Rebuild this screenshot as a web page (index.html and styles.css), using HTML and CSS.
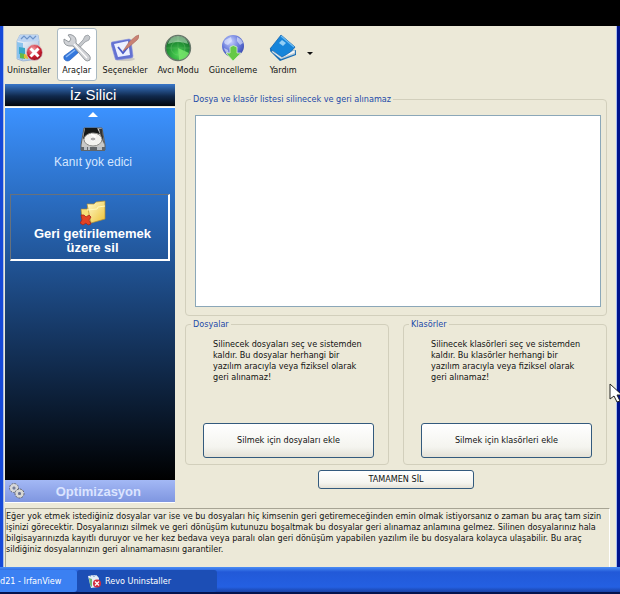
FILE: index.html
```html
<!DOCTYPE html>
<html lang="tr">
<head>
<meta charset="utf-8">
<title>Revo Uninstaller</title>
<link rel="stylesheet" href="styles.css">
</head>
<body>
<div class="window">
  <nav class="toolbar" aria-label="Araç çubuğu">
    <button class="tool" type="button">
      <svg class="tool-icon" viewBox="0 0 28 28" aria-hidden="true">
        <defs>
          <linearGradient id="box" x1="0" y1="0" x2="1" y2="1"><stop offset="0" stop-color="#fff"/><stop offset="1" stop-color="#9fb9dc"/></linearGradient>
          <radialGradient id="red" cx=".4" cy=".3" r=".8"><stop offset="0" stop-color="#f4a0a8"/><stop offset=".6" stop-color="#c81c2c"/><stop offset="1" stop-color="#860f20"/></radialGradient>
        </defs>
        <path d="M2 7 5 1h18l1 6v18l-16 2-6-2z" fill="url(#box)" stroke="#86a9d4" stroke-width=".7"/>
        <path d="M2 7 5 1h18l1 6-15 1z" fill="#bcd4f2"/>
        <path d="m6 5 3-3 3 3 3-3 3 3 3-3" fill="none" stroke="#6d94c9" stroke-width="1.2"/>
        <path d="M2 8l6 1v17l-6-2z" fill="#8bc3ee"/>
        <path d="M4 13l6 1v7l-6-1z" fill="#3aa7c9"/><path d="M5 19l5 1v5l-5-1z" fill="#63b94a"/><path d="M9 20l4 1v4l-4-1z" fill="#e2bd38"/>
        <circle cx="19.500" cy="18.500" r="8" fill="url(#red)" stroke="#d9c5cc" stroke-width=".8"/>
        <path d="m15.500 14.500 8 8m0-8-8 8" stroke="#fff" stroke-width="3"/>
      </svg>
      <span>Uninstaller</span>
    </button>
    <button class="tool tool-active" type="button" aria-pressed="true">
      <svg class="tool-icon" viewBox="0 0 28 28" aria-hidden="true">
        <path d="M25 1 22 2l-2 4L4 23l2 2L22 8l4-2 1-3z" fill="#c6c9cd" stroke="#8b9096" stroke-width=".7"/>
        <path d="M12 14 1 22q-1 4 3 5 2 0 3-1l9-8z" fill="#3478dd" stroke="#1c55b4" stroke-width=".6"/>
        <path d="m3 23 9-7" stroke="#8dbaf6" stroke-width="1.500"/>
        <path d="M1 5q-1 6 5 7 2 0 4 0l12 14q2 2 5 0 1-3-1-5L13 9q1-6-4-8-2-1-4 0l3 4-2 3z" fill="#d0d2d6" stroke="#80868c" stroke-width=".8"/>
        <path d="m11 10 13 14" stroke="#fff" stroke-width="1.200"/>
      </svg>
      <span>Araçlar</span>
    </button>
    <button class="tool" type="button">
      <svg class="tool-icon" viewBox="0 0 28 28" aria-hidden="true">
        <ellipse cx="14" cy="25" rx="10" ry="2" fill="#b9b5b4" opacity=".6"/>
        <path d="m1 8 17-3q2 0 2 2l2 15q0 2-2 2L6 26q-2 0-2-2L0 10q0-2 1-2z" fill="#6472d2" stroke="#8992dd" stroke-width=".6"/>
        <path d="m3 10 14-3 2 14-12 2z" fill="#edf0ff"/>
        <path d="m7 13 5 6 5-6" fill="none" stroke="#4b5bc7" stroke-width="1.800"/>
        <path d="m12 17 6-9 7-6 3-1q0 4-3 6l-7 6z" fill="#c98273" stroke="#a46056" stroke-width=".5"/>
      </svg>
      <span>Seçenekler</span>
    </button>
    <button class="tool" type="button">
      <svg class="tool-icon" viewBox="0 0 28 28" aria-hidden="true">
        <defs><radialGradient id="radar" cx=".5" cy=".75" r=".75"><stop offset="0" stop-color="#4cd552"/><stop offset=".55" stop-color="#259637"/><stop offset="1" stop-color="#145f28"/></radialGradient></defs>
        <circle cx="14" cy="14" r="12.500" fill="url(#radar)" stroke="#68776b" stroke-width="1.400"/>
        <path d="M14 14 25 19A12 12 0 0 1 15 26z" fill="#80ed70" opacity=".75"/>
        <circle cx="14" cy="14" r="7" fill="none" stroke="#75ca75" stroke-width=".4"/>
        <path d="M14 2v24M2 14h24" stroke="#76bf77" stroke-width=".3"/>
        <path d="M4 10q2-8 10-8t10 8q-10-4-20 0z" fill="#dcf3dd" opacity=".5"/>
      </svg>
      <span>Avcı Modu</span>
    </button>
    <button class="tool" type="button">
      <svg class="tool-icon" viewBox="0 0 28 28" aria-hidden="true">
        <defs><radialGradient id="globe" cx=".4" cy=".3" r=".7"><stop offset="0" stop-color="#c8d2ff"/><stop offset=".6" stop-color="#6679da"/><stop offset="1" stop-color="#3e4fb4"/></radialGradient></defs>
        <circle cx="14" cy="12" r="11" fill="url(#globe)"/>
        <path d="m6 6 6-3 1 4-4 4-3-1-1-2zm12-3q5 2 6 6l-3 2-3-4zM5 14l4 2 1 4q-4-1-5-6z" fill="#e8efff" opacity=".6"/>
        <path d="M11 13q3-3 7 0v6h4l-8 8-7-8h4z" fill="#65c947" stroke="#d7f0cd" stroke-width=".8"/>
      </svg>
      <span>Güncelleme</span>
    </button>
    <button class="tool" type="button">
      <svg class="tool-icon" viewBox="0 0 28 28" aria-hidden="true">
        <path d="m1 17 10 10 16-6v-5l-15 5L2 13z" fill="#116ab5"/>
        <path d="m3 18 9 7 14-5v-4l-14 5-9-7z" fill="#f2f5f7" stroke="#7fa6c3" stroke-width=".5"/>
        <path d="m1 15 11-14 14 12q-3 5-13 10z" fill="#1685da" stroke="#0c5ba7" stroke-width=".7"/>
        <path d="m12 2 13 11" stroke="#6dbcf3" stroke-width="1.200"/>
        <path d="m10 9 3-3 4 3-3 3z" fill="#91cef6"/>
        <path d="m4 17 9 7 13-5" fill="none" stroke="#9baebc" stroke-width=".6"/>
      </svg>
      <span>Yardım</span>
    </button>
    <button class="more" type="button" aria-label="Yardım seçenekleri"></button>
  </nav>

  <div class="body">
    <aside class="sidebar">
      <h1 class="side-title">İz Silici</h1>
      <div class="side-list">
        <span class="scroll-up"></span>
        <button class="side-item" type="button">
          <svg class="side-icon" viewBox="0 0 26 26" aria-hidden="true">
            <path d="M4 2h18l3 17v5H1v-5z" fill="#c8c9c8" stroke="#605f5c"/>
            <path d="M5 2h12l3 6-7-1-10 6z" fill="#151818"/>
            <path d="M19 3h3l2 15-3-7z" fill="#343434"/>
            <ellipse cx="13" cy="13.500" rx="9" ry="6.500" fill="#f2f2ef" stroke="#8b8b88"/>
            <ellipse cx="13" cy="13" rx="3" ry="2" fill="#aaa" stroke="#fff"/>
            <path d="m11 8 5 3" stroke="#fff" stroke-width="1.500"/>
            <path d="M1 21h24v4H1z" fill="#606569"/><path d="M4 21h3v3H4m4-3h2v3H8m9-3h5v3h-5" fill="#b9bec3"/>
          </svg>
          <span>Kanıt yok edici</span>
        </button>
        <button class="side-item side-selected" type="button">
          <svg class="side-icon" viewBox="0 0 26 26" aria-hidden="true">
            <defs><linearGradient id="folder" x1="0" y1="0" x2="1" y2="1"><stop offset="0" stop-color="#fffbd0"/><stop offset="1" stop-color="#edc236"/></linearGradient></defs>
            <path d="M1 9h6l1-2h8v12l-9 4-5-4z" fill="#f7df79" stroke="#a9812b" stroke-width=".6"/>
            <path d="M7 4h7l2-2 9-1v18l-14 4z" fill="url(#folder)" stroke="#b7902f" stroke-width=".7"/>
            <path d="m7 10 10-1 1-2 7-1" fill="none" stroke="#fff9bb"/>
            <path d="m1 15 3 0 2 2 3-2 2 2-2 3 2 4-3 1-2-2-3 2-3-2 2-3z" fill="#e34325" stroke="#a92717" stroke-width=".8"/>
          </svg>
          <span>Geri getirilememek<br>üzere sil</span>
        </button>
      </div>
      <button class="side-section" type="button">
        <svg class="gears" viewBox="0 0 16 16" aria-hidden="true">
          <circle cx="5" cy="5" r="3" fill="none" stroke="#d8d8d8" stroke-width="3"/>
          <circle cx="5" cy="5" r="4.500" fill="none" stroke="#666b7b" stroke-dasharray="2 1"/>
          <circle cx="5" cy="5" r="1.500" fill="#777d91"/>
          <circle cx="10.500" cy="10.500" r="3" fill="none" stroke="#d8d8d4" stroke-width="3"/>
          <circle cx="10.500" cy="10.500" r="4.500" fill="none" stroke="#60636e" stroke-dasharray="2 1"/>
          <circle cx="10.500" cy="10.500" r="1.500" fill="#6d7284"/>
        </svg>
        <span>Optimizasyon</span>
      </button>
    </aside>

    <main class="main">
      <fieldset class="group">
        <legend>Dosya ve klasör listesi silinecek ve geri alınamaz</legend>
        <div class="file-list" role="listbox" aria-label="Dosya ve klasör listesi"></div>
      </fieldset>
      <div class="columns">
        <fieldset class="group group-add">
          <legend>Dosyalar</legend>
          <p>Silinecek dosyaları seç ve sistemden<br>kaldır. Bu dosyalar herhangi bir<br>yazılım aracıyla veya fiziksel olarak<br>geri alınamaz!</p>
          <button class="push push-big" type="button">Silmek için dosyaları ekle</button>
        </fieldset>
        <fieldset class="group group-add">
          <legend>Klasörler</legend>
          <p>Silinecek klasörleri seç ve sistemden<br>kaldır. Bu klasörler herhangi bir<br>yazılım aracıyla veya fiziksel olarak<br>geri alınamaz!</p>
          <button class="push push-big" type="button">Silmek için klasörleri ekle</button>
        </fieldset>
      </div>
      <button class="push push-wipe" type="button">TAMAMEN SİL</button>
    </main>
  </div>

  <p class="description">Eğer yok etmek istediğiniz dosyalar var ise ve bu dosyaları hiç kimsenin geri getiremeceğinden emin olmak istiyorsanız o zaman bu araç tam sizin<br>işinizi görecektir. Dosyalarınızı silmek ve geri dönüşüm kutunuzu boşaltmak bu dosyalar geri alınamaz anlamına gelmez. Silinen dosyalarınız hala<br>bilgisayarınızda kayıtlı duruyor ve her kez bedava veya paralı olan geri dönüşüm yapabilen yazılım ile bu dosyalara kolayca ulaşabilir. Bu araç<br>sildiğiniz dosyalarınızın geri alınamamasını garantiler.</p>
  <svg class="cursor" viewBox="0 0 12 20" aria-hidden="true"><path d="M1 1v15l4-3 3 6 3-1-3-6h5z" fill="#fff" stroke="#222"/></svg>
</div>

<footer class="taskbar">
  <button class="task task-first" type="button">d21 - IrfanView</button>
  <button class="task task-current" type="button">
    <svg class="task-icon" viewBox="0 0 14 14" aria-hidden="true">
      <path d="M1 2 9 1l3 3-1 9-7 1z" fill="#e5eef9"/><path d="m2 4 3 1v8l-2-2z" fill="#72b777"/><path d="m3 3 2-2 2 2 2-2 2 2" fill="none" stroke="#a8bddc"/>
      <circle cx="10" cy="9.500" r="4" fill="#d32b3e"/><path d="m8 7.500 4 4m0-4-4 4" stroke="#fff" stroke-width="1.200"/>
    </svg>
    <span>Revo Uninstaller</span>
  </button>
</footer>
</body>
</html>
```
FILE: styles.css
```css
* {
  box-sizing: border-box;
}

body {
  margin: 0;
  padding-top: 26px;
  min-height: 100vh;
  display: flex;
  flex-direction: column;
  background: #000;
  color: #111;
  font: 9px/11px "DejaVu Sans Condensed", "DejaVu Sans", sans-serif;
}

button {
  margin: 0;
  padding: 0;
  border: 0;
  background: none;
  color: inherit;
  font: inherit;
}

p {
  margin: 0;
}

.window {
  position: relative;
  flex: 1;
  display: flex;
  flex-direction: column;
  padding: 0 7px 0 5px;
  background: #ece9d8;
  border-right: 3px solid #00138c;
  box-shadow: inset 3px 0 #1649d8, inset 4px 0 #a9bce6, inset -1px 0 #a9bdf0;
}

.toolbar {
  display: flex;
  align-items: flex-start;
  gap: 2px;
  padding-top: 2px;
}

.tool {
  display: flex;
  flex-direction: column;
  align-items: center;
  gap: 2px;
  min-width: 40px;
  height: 53px;
  padding: 5px 3px 0;
  border: 1px solid transparent;
  border-radius: 3px;
  line-height: 12px;
  white-space: nowrap;
}

.tool:first-child {
  margin-left: -2px;
}

.tool-active {
  background: #fff;
  border-color: #a9b9c2;
}

.tool-icon {
  width: 28px;
  height: 28px;
}

.more {
  margin: 24px 0 0 2px;
  border: 3px solid transparent;
  border-top-color: #111;
  border-bottom-width: 0;
}

.body {
  flex: 1;
  display: flex;
  gap: 10px;
  padding-top: 3px;
}

.sidebar {
  flex: none;
  width: 170px;
  display: flex;
  flex-direction: column;
  font-family: "Liberation Sans", sans-serif;
  color: #fff;
}

.side-title {
  margin: 0 0 2px;
  height: 22px;
  padding-left: 6px;
  background: linear-gradient(#3977c9, #10294c 55%, #02060c);
  font-size: 15px;
  font-weight: 400;
  line-height: 22px;
  text-align: center;
}

.side-list {
  flex: 1;
  display: flex;
  flex-direction: column;
  align-items: center;
  padding: 4px 5px 0;
  background: linear-gradient(#3c92ff, #2a6cc0 25%, #163865 60%, #000);
  box-shadow: 0 -1px #fff;
}

.scroll-up {
  margin-left: 6px;
  border: 5px solid transparent;
  border-top-width: 0;
  border-bottom-color: #fff;
}

.side-item {
  display: flex;
  flex-direction: column;
  align-items: center;
  gap: 3px;
  width: 100%;
  margin-top: 9px;
  padding-left: 6px;
  font-size: 12px;
  line-height: 14px;
  color: #d4e6ff;
}

.side-selected {
  margin-top: 25px;
  height: 67px;
  padding-top: 5px;
  gap: 1px;
  border: 2px solid #fff;
  border-top: 1px solid #67717c;
  border-left: 1px solid #67717c;
  font-size: 13px;
  font-weight: 700;
  color: #fff;
}

.side-icon {
  width: 26px;
  height: 26px;
}

.side-section {
  display: flex;
  align-items: center;
  height: 23px;
  padding: 0 34px 0 4px;
  background: linear-gradient(#a3b8f5, #7f96e0);
  border-bottom: 1px solid #fff;
  font-size: 13px;
  font-weight: 700;
  color: #dbe4ff;
}

.side-section span {
  flex: 1;
  text-align: right;
}

.gears {
  width: 16px;
  height: 16px;
}

.main {
  flex: 1;
  display: flex;
  flex-direction: column;
  align-items: stretch;
  padding: 9px 3px 0 0;
}

.group {
  min-width: 0;
  margin: 0;
  padding: 10px 5px 8px 9px;
  border: 1px solid #d2cfbc;
  border-radius: 4px;
}

.group legend {
  margin-left: -4px;
  padding: 0 2px;
  color: #1c49a8;
  line-height: 12px;
}

.file-list {
  height: 192px;
  background: #fff;
  border: 1px solid #8ba7b8;
}

.columns {
  display: grid;
  grid-template-columns: 1fr 1fr;
  gap: 14px;
  margin-top: 2px;
}

.group-add {
  padding: 9px 14px 6px 17px;
}

.group-add legend {
  margin-left: -12px;
}

.group-add p {
  height: 84px;
  padding-left: 10px;
  white-space: nowrap;
}

.push {
  background: linear-gradient(#fff, #f4f4ef 70%, #e4e1d6);
  border: 1px solid #335a7d;
  border-radius: 3px;
}

.push-big {
  width: 100%;
  height: 35px;
}

.push-wipe {
  align-self: center;
  width: 156px;
  height: 19px;
  margin-top: 5px;
}

.description {
  height: 59px;
  margin-top: 5px;
  padding-top: 2px;
  border-top: 1px solid #a7a494;
  border-left: 1px solid #a7a494;
  border-right: 1px solid #fff;
  white-space: nowrap;
}

.cursor {
  position: absolute;
  right: -4px;
  top: 357px;
  width: 12px;
  height: 20px;
}

.taskbar {
  display: flex;
  height: 27px;
  background: linear-gradient(#4a8df5, #2259d8 20%, #2460e2 80%, #1941a5);
  border-bottom: 2px solid #04134e;
  color: #fff;
}

.task {
  display: flex;
  align-items: center;
  gap: 4px;
  margin-top: 3px;
  white-space: nowrap;
}

.task-first {
  width: 77px;
  background: #3b80f2;
  border-radius: 0 3px 3px 0;
}

.task-current {
  width: 140px;
  padding-left: 10px;
  background: #1c4eb5;
  border-radius: 3px;
}

.task-icon {
  width: 14px;
  height: 14px;
}
```
